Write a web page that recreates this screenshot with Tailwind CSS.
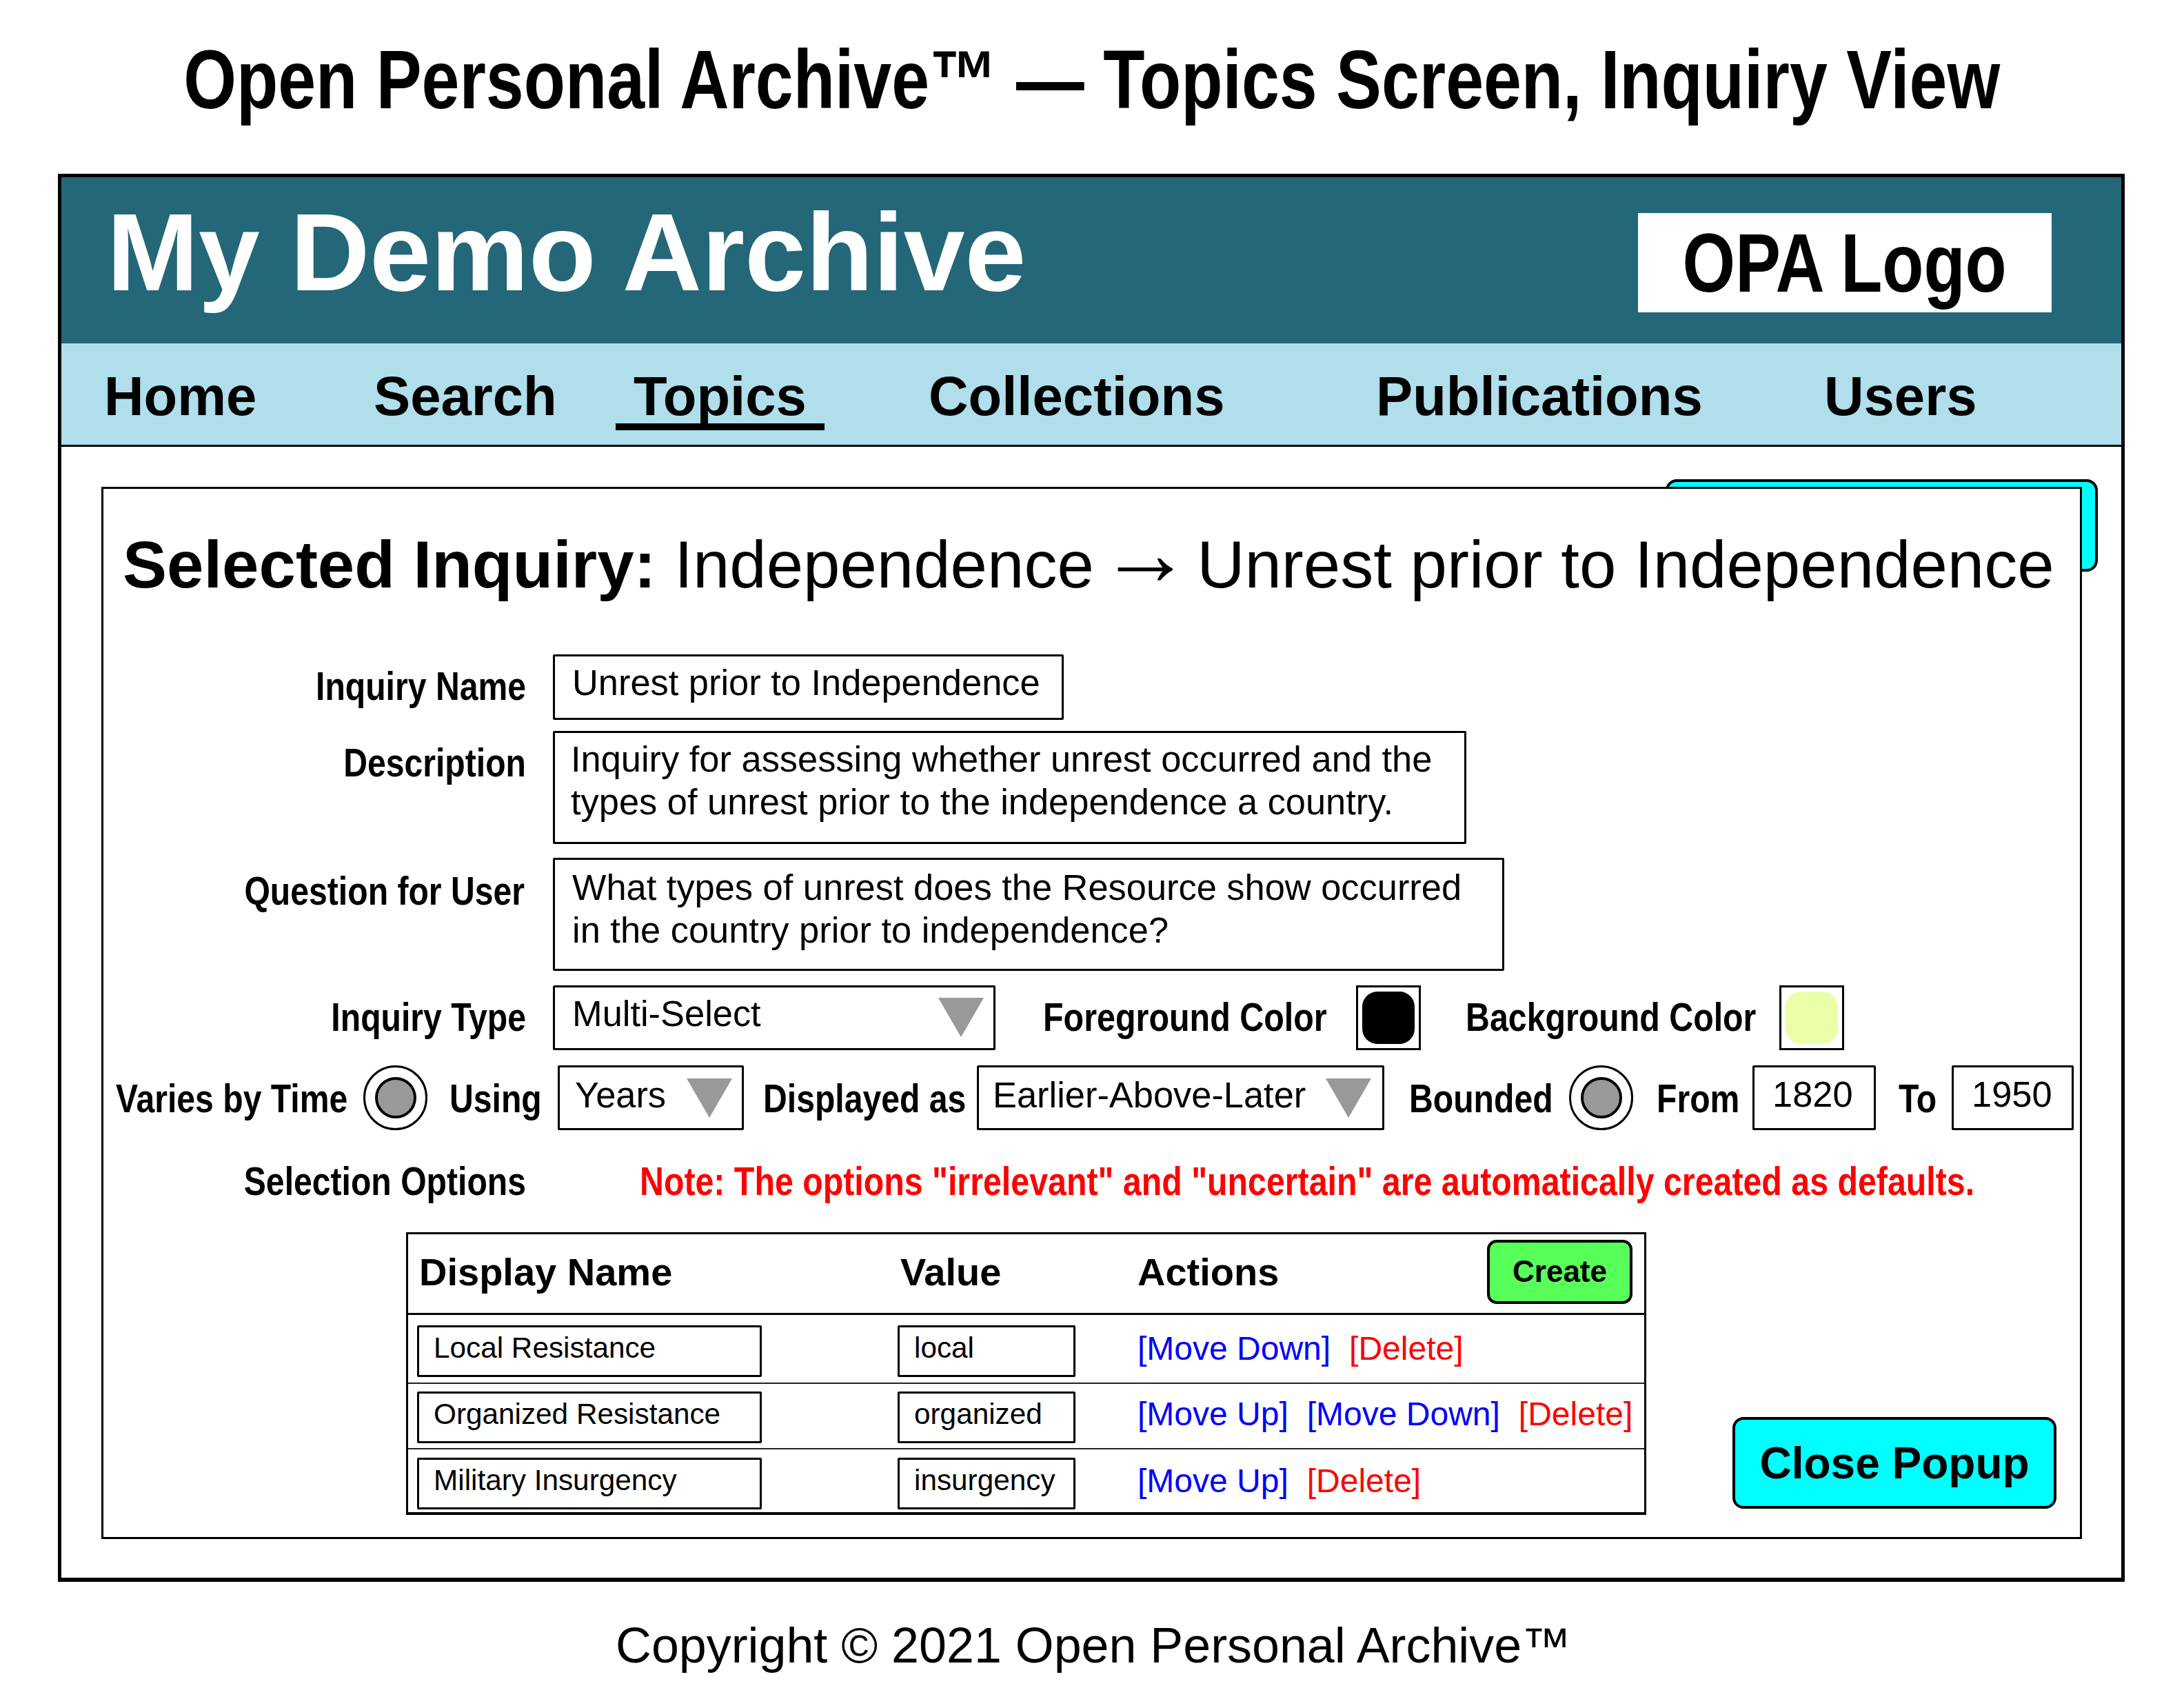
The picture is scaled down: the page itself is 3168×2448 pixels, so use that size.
<!DOCTYPE html>
<html lang="en">
<head>
    <meta charset="UTF-8">
    <title>Open Personal Archive - Topics Screen, Inquiry View</title>
    <script src="https://cdn.jsdelivr.net/npm/@tailwindcss/browser@4"></script>
</head>
<body class="bg-white text-black w-[3168px] h-[2448px] overflow-hidden font-['Liberation_Sans',Arial,sans-serif]">
    <div class="h-[252px] pb-[22px] flex items-center justify-center">
        <h1 class="text-[120px] font-bold whitespace-nowrap scale-x-[.822]">Open Personal Archive™ — Topics Screen, Inquiry View</h1>
    </div>

    <div class="ml-[84px] w-[2998px] h-[2042px] border-[5px] border-b-[6px] border-black flex flex-col">
        <header class="h-[241px] shrink-0 bg-[#246778] flex justify-between items-start pl-[66px] pr-[101px]">
            <div class="h-[219px] flex items-center text-[159.6px] font-bold text-white whitespace-nowrap">My Demo Archive</div>
            <div class="mt-[52px] w-[600px] h-[144px] bg-white flex items-center justify-center">
                <span class="text-[120px] font-bold whitespace-nowrap scale-x-[.82]">OPA Logo</span>
            </div>
        </header>

        <nav class="h-[150px] shrink-0 bg-[#b0deea] border-b-[3px] border-black flex pl-[62px] text-[79.7px] font-bold leading-[154px] whitespace-nowrap">
            <a class="w-[391px]">Home</a>
            <a class="w-[351px]">Search</a>
            <a class="relative w-[303px] pl-[26px] mr-[151px]">Topics<span class="absolute left-0 right-0 top-[116px] h-[10px] bg-black"></span></a>
            <a class="w-[649px]">Collections</a>
            <a class="w-[650px]">Publications</a>
            <a>Users</a>
        </nav>

        <main class="relative flex-1 pt-[58px] pl-[58px]">
            <div class="absolute left-[2327px] top-[47px] w-[627px] h-[134px] bg-[#00ffff] border-[4px] border-black rounded-[16px]"></div>

            <section class="relative z-10 w-[2873px] h-[1526px] bg-white border-[3px] border-black">
                <h2 class="mt-[50px] h-[120px] pl-[28px] text-[96px] leading-[120px] font-bold whitespace-nowrap">Selected Inquiry: <span class="font-normal">Independence<span class="[word-spacing:-19px]"> <span class="text-[134px] leading-[0] align-[4px]">→</span> </span>Unrest prior to Independence</span></h2>

                <div class="mt-[70px] flex">
                    <label class="w-[613px] h-[95px] pb-[4px] flex items-center justify-end text-[58px] font-bold whitespace-nowrap origin-right scale-x-[.83]">Inquiry Name</label>
                    <div class="ml-[39px] w-[741px] h-[95px] border-[3px] border-black rounded-[2px] pl-[25px] pt-[7px] text-[52.4px] leading-[62px] whitespace-nowrap">Unrest prior to Independence</div>
                </div>

                <div class="mt-[16px] flex">
                    <label class="w-[613px] h-[95px] pb-[5px] flex items-center justify-end text-[58px] font-bold whitespace-nowrap origin-right scale-x-[.83]">Description</label>
                    <div class="ml-[39px] w-[1325px] h-[164px] border-[3px] border-black rounded-[2px] pl-[23px] pt-[7px] text-[52.4px] leading-[62px] whitespace-nowrap">Inquiry for assessing whether unrest occurred and the<br>types of unrest prior to the independence a country.</div>
                </div>

                <div class="mt-[20px] flex">
                    <label class="w-[611px] h-[95px] flex items-center justify-end text-[58px] font-bold whitespace-nowrap origin-right scale-x-[.83]">Question for User</label>
                    <div class="ml-[41px] w-[1380px] h-[164px] border-[3px] border-black rounded-[2px] pl-[25px] pt-[9px] text-[52.4px] leading-[62px] whitespace-nowrap">What types of unrest does the Resource show occurred<br>in the country prior to independence?</div>
                </div>

                <div class="mt-[21px] h-[94px] flex items-center text-[58px] font-bold whitespace-nowrap">
                    <label class="w-[613px] pb-[4px] shrink-0 text-right origin-right scale-x-[.83]">Inquiry Type</label>
                    <div class="ml-[39px] w-[642px] h-[94px] shrink-0 border-[3px] border-black rounded-[2px] pl-[25px] flex justify-between items-start text-[52.4px] font-normal leading-[62px]">
                        <span class="pt-[7px]">Multi-Select</span>
                        <svg class="mt-[15px] mr-[14px]" width="66" height="57" viewBox="0 0 66 57"><polygon points="0,0 66,0 33,57" fill="#999999"/></svg>
                    </div>
                    <label class="ml-[69px] w-[412px] pb-[4px] shrink-0 origin-left scale-x-[.835]">Foreground Color</label>
                    <div class="ml-[42px] w-[94px] h-[94px] shrink-0 border-[3px] border-black p-[6px]"><div class="h-full rounded-[22px] bg-black"></div></div>
                    <label class="ml-[65px] w-[419px] pb-[4px] shrink-0 origin-left scale-x-[.833]">Background Color</label>
                    <div class="ml-[36px] w-[94px] h-[94px] shrink-0 border-[3px] border-black p-[6px]"><div class="h-full rounded-[22px] bg-[#eaffa8]"></div></div>
                </div>

                <div class="mt-[22px] h-[94px] pl-[18px] flex items-center text-[58px] font-bold whitespace-nowrap">
                    <label class="w-[339px] shrink-0 origin-left scale-x-[.83]">Varies by Time</label>
                    <div class="ml-[20px] w-[93px] h-[94px] shrink-0 rounded-full border-[3px] border-black flex items-center justify-center"><div class="w-[60px] h-[60px] rounded-full bg-[#999999] border-[4px] border-black"></div></div>
                    <label class="ml-[32px] w-[130px] shrink-0 origin-left scale-x-[.83]">Using</label>
                    <div class="ml-[27px] w-[270px] h-[94px] shrink-0 border-[3px] border-black rounded-[2px] pl-[22px] flex justify-between items-start text-[52.4px] font-normal leading-[62px]">
                        <span class="pt-[9px]">Years</span>
                        <svg class="mt-[16px] mr-[14px]" width="66" height="57" viewBox="0 0 66 57"><polygon points="0,0 66,0 33,57" fill="#999999"/></svg>
                    </div>
                    <label class="ml-[28px] w-[291px] shrink-0 origin-left scale-x-[.83]">Displayed as</label>
                    <div class="ml-[19px] w-[591px] h-[94px] shrink-0 border-[3px] border-black rounded-[2px] pl-[20px] flex justify-between items-start text-[52.4px] font-normal leading-[62px]">
                        <span class="pt-[9px]">Earlier-Above-Later</span>
                        <svg class="mt-[16px] mr-[16px]" width="66" height="57" viewBox="0 0 66 57"><polygon points="0,0 66,0 33,57" fill="#999999"/></svg>
                    </div>
                    <label class="ml-[36px] w-[206px] shrink-0 origin-left scale-x-[.83]">Bounded</label>
                    <div class="ml-[26px] w-[93px] h-[94px] shrink-0 rounded-full border-[3px] border-black flex items-center justify-center"><div class="w-[60px] h-[60px] rounded-full bg-[#999999] border-[4px] border-black"></div></div>
                    <label class="ml-[34px] w-[119px] shrink-0 origin-left scale-x-[.83]">From</label>
                    <div class="ml-[20px] w-[179px] h-[94px] shrink-0 border-[3px] border-black rounded-[2px] pl-[26px] pt-[8px] text-[52.4px] font-normal leading-[62px]">1820</div>
                    <label class="ml-[33px] w-[56px] shrink-0 origin-left scale-x-[.83]">To</label>
                    <div class="ml-[21px] w-[177px] h-[94px] shrink-0 border-[3px] border-black rounded-[2px] pl-[26px] pt-[8px] text-[52.4px] font-normal leading-[62px]">1950</div>
                </div>

                <div class="mt-[43px] h-[60px] flex items-center text-[58px] font-bold whitespace-nowrap">
                    <label class="w-[613px] shrink-0 text-right origin-right scale-x-[.83]">Selection Options</label>
                    <p class="ml-[165px] text-[#ff0000] origin-left scale-x-[.833]">Note: The options "irrelevant" and "uncertain" are automatically created as defaults.</p>
                </div>

                <div class="mt-[45px] ml-[439px] flex items-end">
                    <div class="w-[1799px] shrink-0 border-[3px] border-t-[3px] border-b-[4px] border-black">
                        <div class="h-[117px] pl-[13px] pr-[17px] grid grid-cols-[697px_348px_1fr] items-center border-b-[3px] border-black text-[56px] font-bold">
                            <div class="ml-[3px] -mt-[4px]">Display Name</div>
                            <div class="ml-[4px] -mt-[4px]">Value</div>
                            <div class="flex justify-between items-center">
                                <span class="-mt-[4px]">Actions</span>
                                <button class="w-[211px] h-[93px] -translate-y-[3px] bg-[#58ff58] border-[4px] border-black rounded-[14px] text-[44px] font-bold">Create</button>
                            </div>
                        </div>
                        <div class="h-[100px] pl-[13px] grid grid-cols-[697px_348px_1fr] border-b-2 border-[#222222] text-[42.3px]">
                            <div class="self-start mt-[15px] w-[500px] h-[75px] border-[3px] border-black rounded-[2px] pl-[21px] leading-[60px]">Local Resistance</div>
                            <div class="self-start mt-[15px] w-[258px] h-[75px] border-[3px] border-black rounded-[2px] pl-[21px] leading-[60px]">local</div>
                            <div class="self-center flex gap-[27px] text-[48px] whitespace-nowrap"><a class="text-[#0000ff]">[Move Down]</a><a class="text-[#ff0000]">[Delete]</a></div>
                        </div>
                        <div class="h-[95px] pl-[13px] grid grid-cols-[697px_348px_1fr] border-b-2 border-[#222222] text-[42.3px]">
                            <div class="self-start mt-[11px] w-[500px] h-[75px] border-[3px] border-black rounded-[2px] pl-[21px] leading-[60px]">Organized Resistance</div>
                            <div class="self-start mt-[11px] w-[258px] h-[75px] border-[3px] border-black rounded-[2px] pl-[21px] leading-[60px]">organized</div>
                            <div class="self-center -mt-[6px] flex gap-[27px] text-[48px] whitespace-nowrap"><a class="text-[#0000ff]">[Move Up]</a><a class="text-[#0000ff]">[Move Down]</a><a class="text-[#ff0000]">[Delete]</a></div>
                        </div>
                        <div class="h-[91px] pl-[13px] grid grid-cols-[697px_348px_1fr] text-[42.3px]">
                            <div class="self-start mt-[12px] w-[500px] h-[75px] border-[3px] border-black rounded-[2px] pl-[21px] leading-[60px]">Military Insurgency</div>
                            <div class="self-start mt-[12px] w-[258px] h-[75px] border-[3px] border-black rounded-[2px] pl-[21px] leading-[60px]">insurgency</div>
                            <div class="self-center flex gap-[27px] text-[48px] whitespace-nowrap"><a class="text-[#0000ff]">[Move Up]</a><a class="text-[#ff0000]">[Delete]</a></div>
                        </div>
                    </div>
                    <button class="ml-[125px] mb-[9px] w-[470px] h-[133px] bg-[#00ffff] border-[4px] border-black rounded-[16px] text-[64px] font-bold whitespace-nowrap">Close Popup</button>
                </div>
            </section>
        </main>
    </div>

    <footer class="mt-[50px] pl-[4px] text-center text-[71.8px] leading-[84px]">Copyright © 2021 Open Personal Archive™</footer>
</body>
</html>
